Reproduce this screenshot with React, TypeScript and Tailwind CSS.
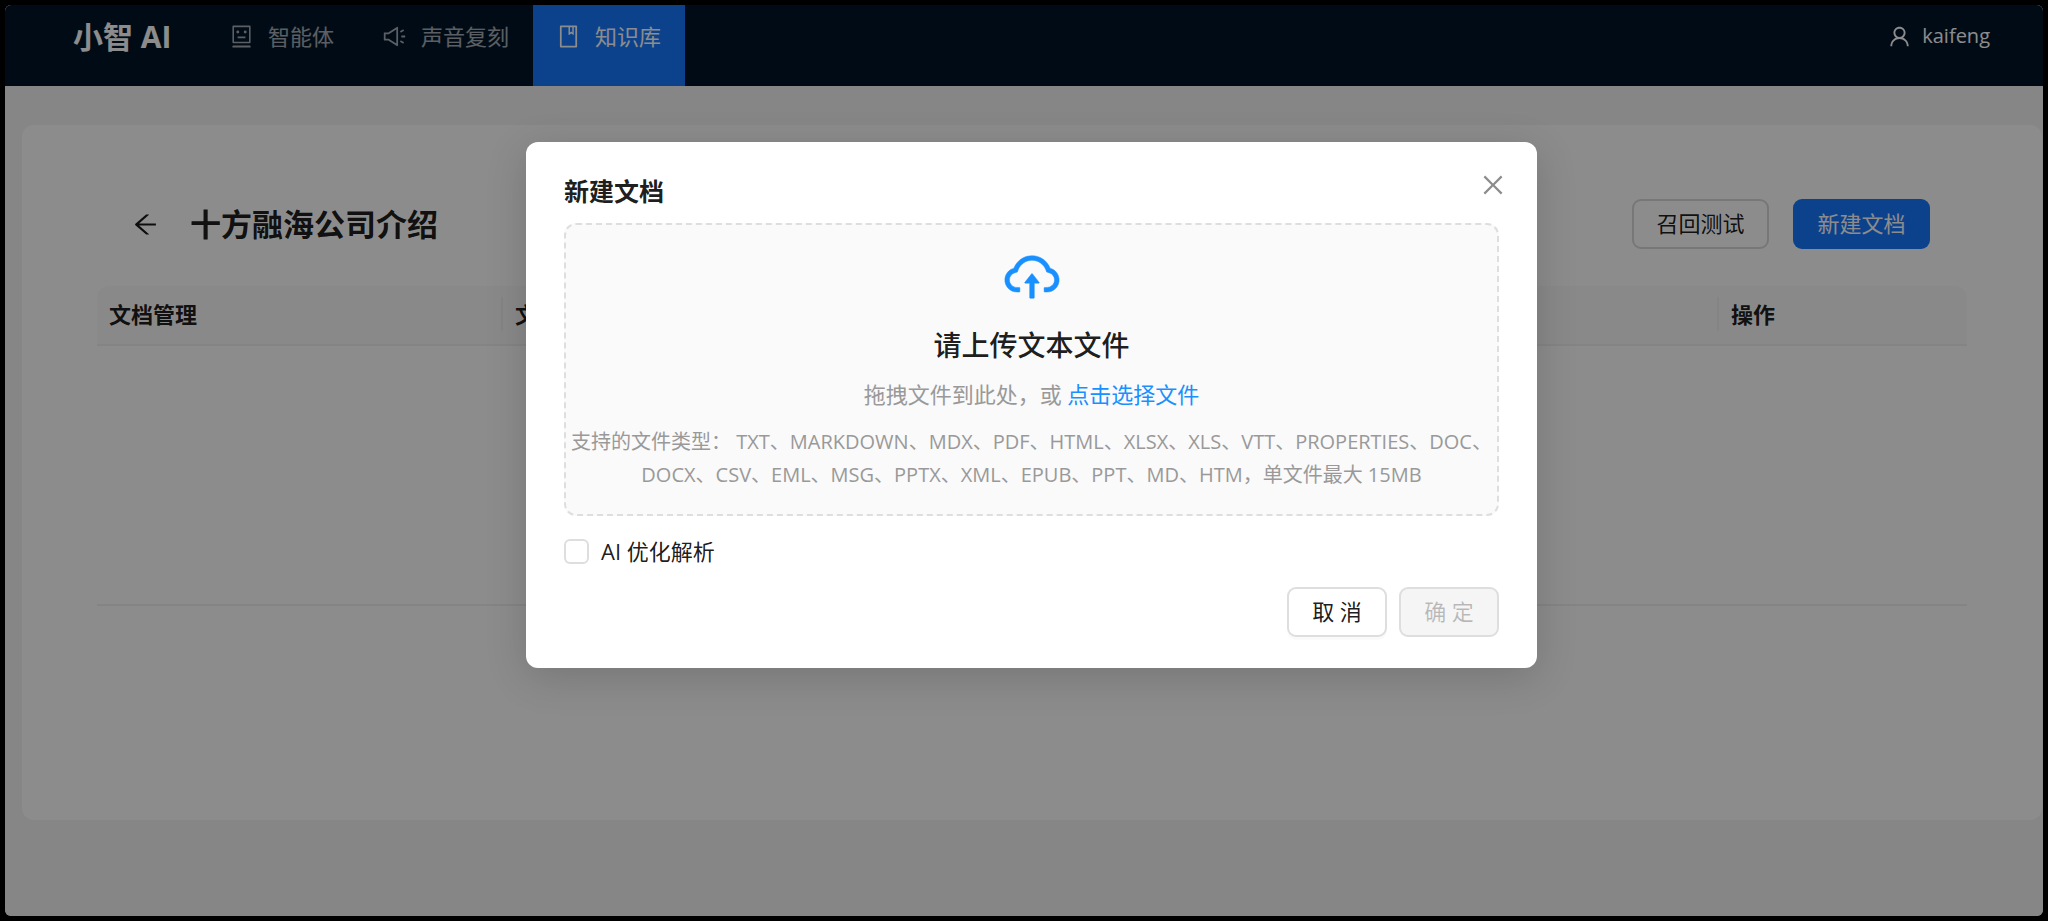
import {
  AiOutlineArrowLeft,
  AiOutlineBook,
  AiOutlineClose,
  AiOutlineCloudUpload,
  AiOutlineRobot,
  AiOutlineSound,
  AiOutlineUser,
} from 'react-icons/ai';
import type { IconType } from 'react-icons';

type MenuItem = { label: string; icon: IconType; active?: boolean };

const menu: MenuItem[] = [
  { label: '智能体', icon: AiOutlineRobot },
  { label: '声音复刻', icon: AiOutlineSound },
  { label: '知识库', icon: AiOutlineBook, active: true },
];

function Header() {
  return (
    <header className="flex h-[81px] items-start bg-[#001529] pr-[53px] pl-[68px] text-[22px]">
      <div className="flex h-[62px] w-[132px] items-center text-[30px] font-bold text-white">小智 AI</div>
      <nav className="flex self-stretch">
        {menu.map(({ label, icon: Icon, active }) => (
          <a
            key={label}
            href="#"
            className={
              active
                ? 'flex gap-[14px] bg-[#1677ff] pr-6 pl-[23px] text-white'
                : 'flex gap-[14px] pr-6 pl-6 text-white/65'
            }
          >
            <span className="flex h-[62px] items-center">
              <Icon size={25} />
            </span>
            <span className="flex h-[62px] items-center">{label}</span>
          </a>
        ))}
      </nav>
      <button type="button" className="ml-auto flex h-[62px] items-center gap-[10px] text-white">
        <AiOutlineUser size={25} />
        <span className="text-[20px]">kaifeng</span>
      </button>
    </header>
  );
}

function DocumentPage() {
  return (
    <main className="mt-[39px] mr-px ml-[17px] flex h-[695px] flex-col rounded-xl bg-white pr-[75px] pl-[75px]">
      <div className="mt-[74px] flex h-[50px] items-center pr-[37px] pl-[34px]">
        <button type="button" aria-label="返回" className="text-black/90">
          <AiOutlineArrowLeft size={29} />
        </button>
        <h1 className="ml-[30px] text-[31px] font-semibold text-black/90">十方融海公司介绍</h1>
        <div className="ml-auto flex gap-6 text-[22px]">
          <button
            type="button"
            className="h-[50px] w-[137px] rounded-[9px] border-2 border-[#d9d9d9] bg-white pb-[2px] text-black/90"
          >
            召回测试
          </button>
          <button type="button" className="h-[50px] w-[137px] rounded-[9px] bg-[#1677ff] pb-[2px] text-white">
            新建文档
          </button>
        </div>
      </div>
      <table className="mt-[37px] w-full table-fixed border-separate border-spacing-0 text-left text-[22px]">
        <thead>
          <tr className="h-[60px] text-black/90">
            <th className="w-[406px] rounded-tl-xl border-b-2 border-[#f0f0f0] bg-[#fafafa] p-0 pb-[2px]">
              <div className="flex h-[34px] items-center border-r-2 border-[#f0f0f0] pl-3">文档管理</div>
            </th>
            <th className="border-b-2 border-[#f0f0f0] bg-[#fafafa] p-0 pb-[2px]">
              <div className="flex h-[34px] items-center border-r-2 border-[#f0f0f0] pl-3">文档大小</div>
            </th>
            <th className="w-[248px] rounded-tr-xl border-b-2 border-[#f0f0f0] bg-[#fafafa] p-0 pb-[2px]">
              <div className="flex h-[34px] items-center pl-3">操作</div>
            </th>
          </tr>
        </thead>
        <tbody>
          <tr>
            <td colSpan={3} className="h-[260px] border-b-2 border-[#f0f0f0]" />
          </tr>
        </tbody>
      </table>
    </main>
  );
}

function UploadDialog() {
  return (
    <div
      role="dialog"
      aria-labelledby="dialog-title"
      className="relative w-[1011px] rounded-xl bg-white px-[38px] pt-[30px] pb-[31px] shadow-[0_9px_42px_rgba(0,0,0,0.16)]"
    >
      <h2 id="dialog-title" className="h-[51px] text-[25px] leading-[38px] font-semibold text-black/90">
        新建文档
      </h2>
      <button
        type="button"
        aria-label="关闭"
        className="absolute top-[26px] right-[27px] flex size-[34px] items-center justify-center text-black/45"
      >
        <AiOutlineClose size={28} />
      </button>
      <div className="flex h-[293px] flex-col items-center rounded-xl border-2 border-dashed border-[#dedede] bg-[#fafafa] pt-[21px] text-center">
        <AiOutlineCloudUpload size={62} strokeWidth={8} className="text-[#1890ff]" />
        <h3 className="mt-[15px] text-[28px] leading-[44px] font-medium text-black/90">请上传文本文件</h3>
        <p className="mt-[10px] text-[22px] leading-[34px] text-[#999999]">
          拖拽文件到此处，或{' '}
          <a href="#" className="text-[#1890ff]">
            点击选择文件
          </a>
        </p>
        <p className="mt-[14px] text-[20px] leading-[33px] text-[#999999]">
          支持的文件类型： TXT、MARKDOWN、MDX、PDF、HTML、XLSX、XLS、VTT、PROPERTIES、DOC、DOCX、CSV、EML、MSG、PPTX、XML、EPUB、PPT、MD、HTM，单文件最大 15MB
        </p>
      </div>
      <label className="mt-[18px] flex h-[34px] items-center gap-3 text-[22px] text-black/90">
        <input
          type="checkbox"
          className="size-[25px] appearance-none rounded-md border-2 border-[#dedede] bg-white checked:bg-[#1677ff]"
        />
        AI 优化解析
      </label>
      <div className="mt-[19px] flex justify-end gap-3 text-[22px]">
        <button
          type="button"
          className="h-[50px] w-[100px] rounded-[9px] border-2 border-[#dedede] bg-white pb-[2px] text-black/90 shadow-[0_3px_0_rgba(0,0,0,0.02)]"
        >
          取 消
        </button>
        <button
          type="button"
          disabled
          className="h-[50px] w-[100px] rounded-[9px] border-2 border-[#dedede] bg-[#f5f5f5] pb-[2px] text-black/25"
        >
          确 定
        </button>
      </div>
    </div>
  );
}

export default function App() {
  return (
    <div className="flex min-h-screen bg-black p-[5px] font-['Open_Sans','Noto_Sans_CJK_SC',sans-serif]">
      <div className="relative grow overflow-hidden rounded-[6px] bg-[#f5f5f5]">
        <Header />
        <DocumentPage />
        <div className="absolute inset-0 flex items-start justify-center bg-black/45 pt-[137px] pl-[15px]">
          <UploadDialog />
        </div>
      </div>
    </div>
  );
}
